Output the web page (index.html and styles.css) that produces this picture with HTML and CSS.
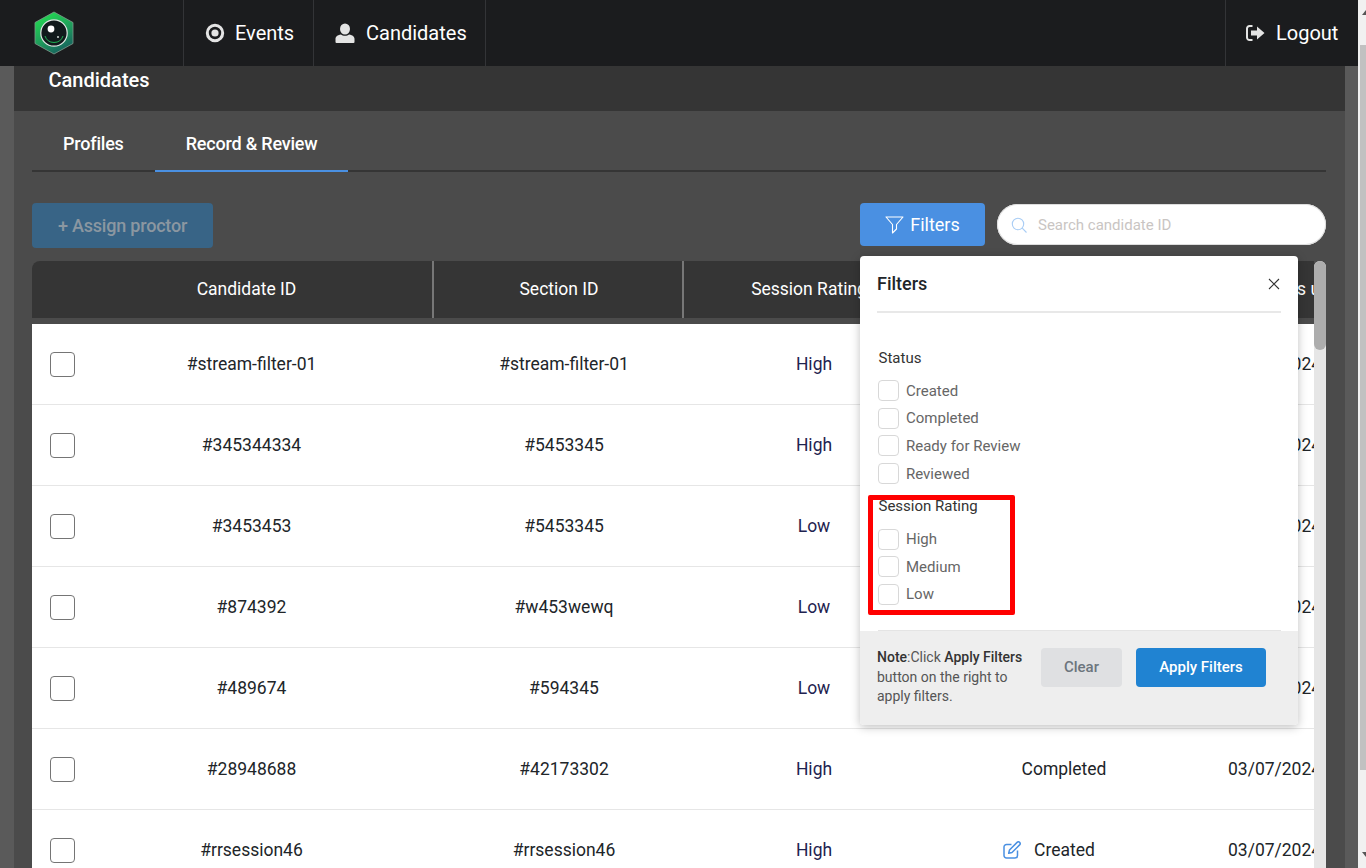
FILE: index.html
```html
<!DOCTYPE html>
<html lang="en">
<head>
<meta charset="utf-8">
<title>Candidates</title>
<link rel="stylesheet" href="styles.css">
</head>
<body>
<div class="page">
  <nav class="nav">
    <div class="logo">
      <svg width="40" height="44" viewBox="0 0 40 44">
        <defs>
          <linearGradient id="hex" x1="0.25" y1="0" x2="0.75" y2="1">
            <stop offset="0" stop-color="#22dc50"/>
            <stop offset="0.55" stop-color="#1f9a5c"/>
            <stop offset="1" stop-color="#155a5e"/>
          </linearGradient>
        </defs>
        <polygon points="20,1 39,11.5 39,32.5 20,43 1,32.5 1,11.5" fill="url(#hex)" stroke="#7f9a8c" stroke-width="0.8"/>
        <circle cx="20" cy="22" r="13.2" fill="#111a1c" stroke="#dfe8e4" stroke-width="1.2"/>
        <path d="M11 25a9.5 9.5 0 0 0 18 0" fill="none" stroke="#1fb455" stroke-width="1"/>
        <circle cx="17" cy="18" r="3.4" fill="#fff"/>
        <circle cx="24" cy="26" r="1" fill="#cfd8d4"/>
      </svg>
    </div>
    <a class="nav-item nav-events">
      <svg width="20" height="20" viewBox="0 0 20 20"><circle cx="10" cy="10" r="7.700" fill="none" stroke="#e4e4e4" stroke-width="3"/><circle cx="10" cy="10" r="3.600" fill="#e4e4e4"/></svg>
      <span>Events</span>
    </a>
    <a class="nav-item nav-cand">
      <svg width="20" height="20" viewBox="0 0 20 20"><ellipse cx="10" cy="6" rx="5" ry="5.6" fill="#e4e4e4"/><path d="M0.5 19v-3.2c0-2.6 2.6-4 5.4-4.4 1 .9 2.500 1.400 4.100 1.400s3.100-.5 4.100-1.400c2.800.4 5.400 1.800 5.400 4.400V19a1 1 0 0 1-1 1H1.500a1 1 0 0 1-1-1z" fill="#e4e4e4"/></svg>
      <span>Candidates</span>
    </a>
    <div class="nav-spacer"></div>
    <a class="nav-item nav-logout">
      <svg width="19" height="16" viewBox="0 0 19 16"><path d="M6.500 1H3.500A2.500 2.500 0 0 0 1 3.500v9A2.500 2.500 0 0 0 3.500 15h3" fill="none" stroke="#e4e4e4" stroke-width="2"/><path d="M5 5.500h6V1.500L18.500 8 11 14.500v-4H5z" fill="#e4e4e4"/></svg>
      <span>Logout</span>
    </a>
  </nav>
  <div class="body-row">
    <div class="strip strip-left"></div>
    <main class="main">
      <div class="title-bar">Candidates</div>
      <div class="tabs">
        <a class="tab">Profiles</a>
        <a class="tab tab-active">Record &amp; Review</a>
      </div>
      <div class="toolbar">
        <button class="btn-assign">+ Assign proctor</button>
        <div class="toolbar-right">
          <button class="btn-filters">
            <svg width="19" height="18" viewBox="0 0 19 18"><path d="M1 1h17l-6.500 7.500V13l-4 4V8.500z" fill="none" stroke="#fff" stroke-width="1.100" stroke-linejoin="round"/></svg>
            Filters
          </button>
          <div class="search">
            <svg width="16" height="16" viewBox="0 0 16 16"><circle cx="7" cy="7" r="5.700" fill="none" stroke="#a9cdf5" stroke-width="1.100"/><path d="M11.200 11.200l4.300 4.300" stroke="#a9cdf5" stroke-width="1.100"/></svg>
            <span>Search candidate ID</span>
          </div>
        </div>
      </div>
      <div class="table-wrap">
        <div class="table">
          <div class="thead">
            <div class="th th-cand">Candidate ID</div>
            <div class="th th-sec">Section ID</div>
            <div class="th th-rate">Session Rating</div>
            <div class="th th-stat">Status</div>
            <div class="th th-upd">Status updated on</div>
          </div>
          <div class="tr"><div class="td td-cand"><span class="check"></span><span class="cand-id">#stream-filter-01</span></div><div class="td">#stream-filter-01</div><div class="td rate">High</div><div class="td">Completed</div><div class="td td-date">03/07/2024</div></div>
          <div class="tr"><div class="td td-cand"><span class="check"></span><span class="cand-id">#345344334</span></div><div class="td">#5453345</div><div class="td rate">High</div><div class="td">Completed</div><div class="td td-date">03/07/2024</div></div>
          <div class="tr"><div class="td td-cand"><span class="check"></span><span class="cand-id">#3453453</span></div><div class="td">#5453345</div><div class="td rate">Low</div><div class="td">Completed</div><div class="td td-date">03/07/2024</div></div>
          <div class="tr"><div class="td td-cand"><span class="check"></span><span class="cand-id">#874392</span></div><div class="td">#w453wewq</div><div class="td rate">Low</div><div class="td">Completed</div><div class="td td-date">03/07/2024</div></div>
          <div class="tr"><div class="td td-cand"><span class="check"></span><span class="cand-id">#489674</span></div><div class="td">#594345</div><div class="td rate">Low</div><div class="td">Completed</div><div class="td td-date">03/07/2024</div></div>
          <div class="tr"><div class="td td-cand"><span class="check"></span><span class="cand-id">#28948688</span></div><div class="td">#42173302</div><div class="td rate">High</div><div class="td">Completed</div><div class="td td-date">03/07/2024</div></div>
          <div class="tr"><div class="td td-cand"><span class="check"></span><span class="cand-id">#rrsession46</span></div><div class="td">#rrsession46</div><div class="td rate">High</div><div class="td td-created">
            <svg width="18" height="18" viewBox="0 0 18 18"><path d="M14.500 9.500v5a2.500 2.500 0 0 1-2.500 2.500H3.500A2.500 2.500 0 0 1 1 14.500V6a2.500 2.500 0 0 1 2.500-2.500h5" fill="none" stroke="#4a90e2" stroke-width="1.500"/><path d="M6.500 9l-.8 3.300 3.300-.8 7.600-7.600a1.700 1.700 0 0 0-2.500-2.500z" fill="none" stroke="#4a90e2" stroke-width="1.500" stroke-linejoin="round"/></svg>
            Created</div><div class="td td-date">03/07/2024</div></div>
        </div>
        <div class="table-scroll"><div class="table-thumb"></div></div>
      </div>

      <aside class="popover">
        <div class="pop-head">
          <h3>Filters</h3>
          <svg width="12" height="12" viewBox="0 0 12 12"><path d="M1 1l10 10M11 1L1 11" stroke="#333" stroke-width="1.100"/></svg>
        </div>
        <div class="pop-body">
          <div class="group-label">Status</div>
          <label class="opt"><span class="opt-box"></span>Created</label>
          <label class="opt"><span class="opt-box"></span>Completed</label>
          <label class="opt"><span class="opt-box"></span>Ready for Review</label>
          <label class="opt"><span class="opt-box"></span>Reviewed</label>
          <div class="group-label group-second">Session Rating</div>
          <label class="opt"><span class="opt-box"></span>High</label>
          <label class="opt"><span class="opt-box"></span>Medium</label>
          <label class="opt"><span class="opt-box"></span>Low</label>
        </div>
        <div class="pop-foot">
          <p class="note"><b>Note</b>:Click <b>Apply Filters</b> button on the right to apply filters.</p>
          <button class="btn-clear">Clear</button>
          <button class="btn-apply">Apply Filters</button>
        </div>
        <div class="highlight"></div>
      </aside>
    </main>
    <div class="strip strip-right"></div>
  </div>
</div>
<div class="vscroll">
  <svg class="arrow-up" width="8" height="5" viewBox="0 0 8 5"><path d="M0 5l4-5 4 5z" fill="#555"/></svg>
  <div class="vthumb"></div>
  <svg class="arrow-down" width="8" height="5" viewBox="0 0 8 5"><path d="M0 0l4 5 4-5z" fill="#555"/></svg>
</div>
</body>
</html>
```

FILE: styles.css
```css
* { box-sizing: border-box; }
html, body { margin: 0; height: 868px; overflow: hidden; }
body {
  display: flex;
  font-family: Roboto, "Liberation Sans", sans-serif;
  background: #fff;
}
button { font-family: inherit; border: 0; padding: 0; }

.page { flex: 1; min-width: 0; height: 868px; display: flex; flex-direction: column; }

.nav { height: 66px; flex: none; display: flex; background: #1b1c1e; color: #fff; font-size: 20px; }
.logo { width: 183px; flex: none; display: flex; align-items: center; padding-left: 34px; }
.nav-item { display: flex; align-items: center; border-left: 1px solid #333437; }
.nav-events { width: 130px; padding-left: 21px; gap: 10px; }
.nav-cand { width: 173px; padding-left: 21px; gap: 11px; border-right: 1px solid #333437; }
.nav-spacer { flex: 1; }
.nav-logout { width: 133px; padding-left: 20px; gap: 11px; }

.body-row { flex: 1; min-height: 0; display: flex; }
.strip { flex: none; background: #5a5a5a; }
.strip-left { width: 14px; }
.strip-right { width: 13px; }

.main { flex: 1; min-width: 0; position: relative; background: #4b4b4b; display: flex; flex-direction: column; overflow: hidden; }
.title-bar { height: 45px; flex: none; background: #353535; color: #fff; font-size: 20px; font-weight: 500; padding: 3px 0 0 34.500px; line-height: 23px; }

.tabs { margin: 0 19px 0 18px; height: 61px; flex: none; display: flex; border-bottom: 2px solid #353535; }
.tab { padding: 0 31px; height: 61px; line-height: 65px; color: #fff; font-size: 18px; font-weight: 500; letter-spacing: -0.2px; }
.tab-active { border-bottom: 2px solid #4a90e2; }

.toolbar { margin: 31px 19px 0 18px; flex: none; height: 45px; display: flex; justify-content: space-between; }
.btn-assign { width: 181px; height: 45px; background: #386486; border-radius: 4px; color: #8b97a1; font-size: 18px; font-weight: 500; letter-spacing: -0.2px; }
.toolbar-right { display: flex; gap: 12px; }
.btn-filters { width: 125px; height: 43px; background: #4a90e2; border-radius: 4px; color: #fff; font-size: 18px; display: flex; align-items: center; justify-content: center; gap: 6px; }
.search { width: 329px; height: 41px; margin-top: 1px; background: #fff; border-radius: 21px; display: flex; align-items: center; gap: 11px; padding-left: 14px; color: #c9c5c3; font-size: 15px; box-shadow: 0 0 0 1px #ddd inset; }

.table-wrap { flex: 1; min-height: 0; margin: 13px 19px 0 18px; display: flex; }
.table { flex: 1; min-width: 0; overflow: hidden; border-radius: 8px 0 0 0; }
.thead { height: 57px; margin-bottom: 6px; background: #353535; color: #fff; font-size: 17.500px; display: flex; align-items: stretch; white-space: nowrap; }
.th { display: flex; align-items: center; justify-content: center; border-right: 2px solid #777; flex: none; padding-bottom: 2px; }
.th-cand { width: 402px; padding-left: 29px; }
.th-sec { width: 250px; padding-left: 2px; }
.th-rate { width: 250px; border-right: 0; }
.th-stat { width: 252px; border-right: 0; }
.th-upd { border-right: 0; padding-left: 70px; }

.tr { height: 81px; width: 1400px; background: #fff; border-bottom: 1px solid #e6e6e6; display: grid; grid-template-columns: 398px 268px 232px 268px 1fr; color: #212529; font-size: 17.500px; }
.td { display: flex; align-items: center; justify-content: center; white-space: nowrap; padding-bottom: 1px; }
.td-cand { justify-content: flex-start; padding-left: 18px; }
.check { width: 25px; height: 25px; flex: none; border: 1px solid #757575; border-radius: 4px; background: #fff; margin-top: 2px; }
.cand-id { flex: 1; text-align: center; padding-right: 2px; }
.rate { color: #1f2350; }
.td-date { justify-content: flex-start; padding-left: 30px; }
.td-created { gap: 13px; padding-right: 30px; }

.table-scroll { width: 12px; flex: none; background: #e6e6e6; border-radius: 6px 6px 0 0; }
.table-thumb { height: 89px; background: #adadad; border-radius: 6px; }

.popover { position: absolute; left: 846px; top: 190px; width: 438px; height: 469px; background: #fff; border-radius: 4px; box-shadow: 0 2px 10px rgba(0,0,0,.25); display: flex; flex-direction: column; color: #212529; }
.pop-head { margin: 0 17px; height: 57px; flex: none; border-bottom: 2px solid #e8e8e8; display: flex; align-items: center; justify-content: space-between; padding-right: 1px; }
.pop-head h3 { margin: 0; font-size: 18px; font-weight: 500; }
.pop-body { flex: 1; margin: 0 17px 0 18px; padding-top: 37px; border-bottom: 1px solid #e4e4e4; }
.group-label { font-size: 15px; line-height: 17px; color: #333; margin-bottom: 10px; font-weight: 400; padding-left: 0.500px; }
.group-second { margin: 11px 0 10px; }
.opt { display: flex; align-items: center; gap: 7px; height: 27.600px; font-size: 15px; color: #666; }
.opt-box { width: 21px; height: 21px; flex: none; border: 1px solid #d8d8d8; border-radius: 4px; background: #fff; }
.pop-foot { height: 94px; flex: none; background: #eee; border-radius: 0 0 4px 4px; display: flex; padding: 17px 32px 0 17px; gap: 14px; align-items: flex-start; }
.note { margin: 0; width: 150px; font-size: 14px; line-height: 19.500px; color: #555; }
.note b { font-weight: 500; color: #333; }
.btn-clear { width: 81px; height: 39px; background: #dfe0e2; border-radius: 4px; color: #6c757d; font-size: 15px; font-weight: 500; padding-bottom: 2px; }
.btn-apply { width: 130px; height: 39px; background: #2083d2; border-radius: 4px; color: #fff; font-size: 15px; font-weight: 500; padding-bottom: 2px; }
.highlight { position: absolute; left: 8px; top: 239px; width: 147px; height: 120px; border: 5px solid #f00; border-radius: 2px; }

.vscroll { width: 8px; flex: none; height: 868px; background: #f1f1f1; display: flex; flex-direction: column; align-items: flex-end; position: relative; }
.arrow-up { position: absolute; top: 10px; left: 4px; }
.arrow-down { position: absolute; bottom: 11px; left: 4px; }
.vthumb { width: 6px; height: 725px; margin-top: 45px; background: #c1c1c1; }
```
